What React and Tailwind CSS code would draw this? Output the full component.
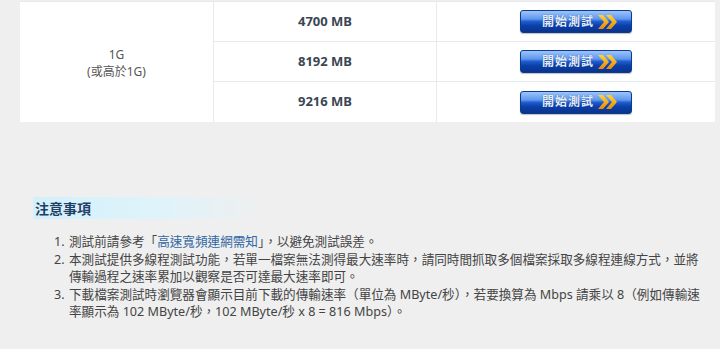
import React from 'react';

const rows = ['4700 MB', '8192 MB', '9216 MB'];

function StartButton() {
  return (
    <button className="flex h-[23px] w-[112px] items-center justify-between rounded-[3px] border border-[#0b3a8f] bg-[linear-gradient(#9cc4fb_0%,#5f98ec_38%,#1f5bd0_50%,#0c3fa6_70%,#08348e_100%)] pl-[21px] pr-[12px] shadow-[0_1px_1px_rgba(0,0,0,0.25)]">
      <span className="whitespace-nowrap text-[12px] font-bold leading-none tracking-[1px] text-[#e6edf8] [text-shadow:0_0_1px_#0b3a8f]">開始測試</span>
      <svg width="22" height="16" viewBox="0 0 22 16" className="shrink-0">
        <defs>
          <linearGradient id="chev" x1="0" y1="0" x2="0" y2="1">
            <stop offset="0" stopColor="#ffd43a" />
            <stop offset="1" stopColor="#e98a0c" />
          </linearGradient>
        </defs>
        <path d="M1 1 H6 L12 8 L6 15 H1 L7 8 Z" fill="url(#chev)" />
        <path d="M9 1 H14 L20 8 L14 15 H9 L15 8 Z" fill="url(#chev)" />
      </svg>
    </button>
  );
}

export default function App() {
  return (
    <div className="h-[349px] w-[720px] overflow-hidden bg-[#efefef] pt-px font-['Noto_Sans','Noto_Sans_CJK_TC',sans-serif] text-[#444]">
      {/* Table */}
      <div className="ml-[20px] mr-[5px] flex bg-white border-t border-[#e6e9ee]">
        <div className="flex w-[194px] flex-col items-center justify-center pt-[2px] text-[12px] leading-[17px] text-[#555] border-r border-[#e6e9ee]">
          <span>1G</span>
          <span>(或高於1G)</span>
        </div>
        <div className="flex-1">
          {rows.map((r, i) => (
            <div key={r} className={`flex h-[40px] ${i < 2 ? 'border-b border-[#e6e9ee]' : ''}`}>
              <div className="flex w-[223px] items-center justify-center border-r border-[#e6e9ee] text-[13px] font-bold text-[#3a4654]">
                {r}
              </div>
              <div className="flex flex-1 items-center justify-center">
                <StartButton />
              </div>
            </div>
          ))}
        </div>
      </div>

      {/* Notes */}
      <div className="mt-[75px] ml-[33px]">
        <div className="flex h-[22px] w-[230px] items-center bg-[linear-gradient(90deg,#d3f0fb_0%,#dff3fa_55%,rgba(239,239,239,0)_100%)] pl-[2px]">
          <h3 className="text-[14px] font-bold text-[#1f3e66]">注意事項</h3>
        </div>
        <ol className="mt-[14px] ml-[21px] text-[12.6px] leading-[17.5px] text-[#444]">
          <li className="flex">
            <span className="w-[15px] shrink-0">1.</span>
            <span>測試前請參考「<a className="text-[#2f66a3]">高速寬頻連網需知</a>」，以避免測試誤差。</span>
          </li>
          <li className="flex">
            <span className="w-[15px] shrink-0">2.</span>
            <span className="whitespace-nowrap">
              本測試提供多線程測試功能，若單一檔案無法測得最大速率時，請同時間抓取多個檔案採取多線程連線方式，並將
              <br />
              傳輸過程之速率累加以觀察是否可達最大速率即可。
            </span>
          </li>
          <li className="flex">
            <span className="w-[15px] shrink-0">3.</span>
            <span className="whitespace-nowrap">
              下載檔案測試時瀏覽器會顯示目前下載的傳輸速率（單位為 MByte/秒），若要換算為 Mbps 請乘以 8（例如傳輸速
              <br />
              率顯示為 102 MByte/秒，102 MByte/秒 x 8 = 816 Mbps）。
            </span>
          </li>
        </ol>
      </div>
    </div>
  );
}
